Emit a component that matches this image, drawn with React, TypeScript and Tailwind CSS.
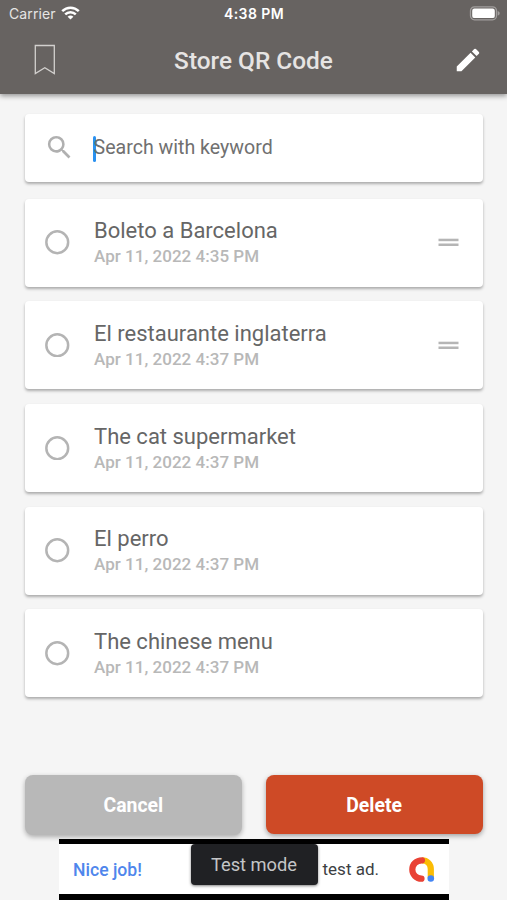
import React from "react";

const items = [
  { title: "Boleto a Barcelona", date: "Apr 11, 2022 4:35 PM", handle: true },
  { title: "El restaurante inglaterra", date: "Apr 11, 2022 4:37 PM", handle: true },
  { title: "The cat supermarket", date: "Apr 11, 2022 4:37 PM", handle: false },
  { title: "El perro", date: "Apr 11, 2022 4:37 PM", handle: false },
  { title: "The chinese menu", date: "Apr 11, 2022 4:37 PM", handle: false },
];

function StatusBar() {
  return (
    <div className="grid h-[27px] grid-cols-3 items-center pl-[9px] pr-[7px] font-[Inter,sans-serif] text-white">
      <div className="flex items-center gap-[5px]">
        <span className="text-[14px] tracking-[0.1px] text-[#e6e5e4]">Carrier</span>
        <svg className="-mt-px" width="19" height="14" viewBox="0 0 19 14" fill="none" stroke="#fff" strokeWidth="2.5">
          <path d="M1.2 5.1C6 .5 13 .5 17.8 5.1" />
          <path d="M4.2 8.3c3-2.9 7.600-2.900 10.600 0" />
          <path d="M9.500 13.600 6.600 10.700c1.700-1.500 4.100-1.500 5.800 0z" fill="#fff" stroke="none" />
        </svg>
      </div>
      <span className="-ml-[1px] text-center text-[14px] font-semibold tracking-[0.400px]">4:38 PM</span>
      <svg className="justify-self-end" width="31" height="15" viewBox="0 0 31 15">
        <rect x="1.500" y="0.800" width="26" height="13" rx="4" fill="none" stroke="#a19e9d" strokeWidth="1.300" />
        <rect x="3.200" y="2.500" width="22.600" height="9.600" rx="2.200" fill="#fff" />
        <path d="M28.700 5v4.600c1.300-.4 2-1.300 2-2.300s-.7-1.900-2-2.300z" fill="#a19e9d" />
      </svg>
    </div>
  );
}

export default function App() {
  return (
    <div className="flex h-[900px] w-[507px] flex-col overflow-hidden bg-[#f5f5f5] font-[Roboto,sans-serif]">
      <header className="relative h-[93.500px] shrink-0 bg-[#676361] shadow-[0_2px_5px_rgba(0,0,0,0.4)]">
        <StatusBar />
        <div className="flex h-[66px] items-center justify-between pl-[34px] pr-[24px]">
          <svg width="22" height="32" viewBox="0 0 22 32" fill="none" stroke="#d2d0ce" strokeWidth="1.300">
            <path d="M1.300 1.500h19v28L10.800 23.800 1.300 29.500z" />
          </svg>
          <h1 className="pr-[2px] pt-[3px] text-[24.400px] font-medium leading-none text-[#e6e4e3]">Store QR Code</h1>
          <svg width="30" height="30" viewBox="0 0 24 24" fill="#fff">
            <path d="M3 17.250V21h3.750L17.810 9.940l-3.750-3.750L3 17.250zM20.710 7.040a1 1 0 0 0 0-1.410l-2.340-2.340a1 1 0 0 0-1.410 0l-1.830 1.830 3.750 3.750 1.830-1.830z" />
          </svg>
        </div>
      </header>

      <main className="flex flex-col px-[25px] pt-[20px]">
        <div className="flex h-[68px] w-[457.500px] items-center rounded-[4px] bg-white pl-[19px] shadow-[0_2px_3px_rgba(0,0,0,0.3)]">
          <svg width="31" height="31" viewBox="0 0 24 24" fill="#b0b0b0">
            <path d="M15.500 14h-.79l-.28-.27A6.471 6.471 0 0 0 16 9.500 6.500 6.500 0 1 0 9.500 16c1.610 0 3.090-.59 4.230-1.570l.27.28v.79l5 4.990L20.490 19l-4.990-5zm-6 0C7.010 14 5 11.990 5 9.500S7.010 5 9.500 5 14 7.010 14 9.500 11.990 14 9.500 14z" />
          </svg>
          <span className="ml-[18px] mt-[2px] h-[26px] w-[2.500px] rounded-full bg-[#2a91f0]" />
          <span className="-ml-[2px] pt-[1.500px] text-[19.600px] leading-6 text-[#707070]">Search with keyword</span>
        </div>

        <ul className="mt-[17px] flex w-[457.500px] flex-col gap-[14.700px]">
          {items.map((item) => (
            <li
              key={item.title}
              className="flex h-[88px] items-center rounded-[4px] bg-white pl-[20px] pr-[24px] shadow-[0_2px_3px_rgba(0,0,0,0.3)]"
            >
              <svg width="24.500" height="24.500" viewBox="0 0 24.500 24.500" fill="none" stroke="#b4b4b4" strokeWidth="2.500">
                <circle cx="12.250" cy="12.250" r="10.900" />
              </svg>
              <div className="ml-[24.500px] flex-1 pt-[2.500px]">
                <div className="text-[22px] leading-[26px] text-[#666]">{item.title}</div>
                <div className="text-[17px] font-medium leading-[25px] tracking-[0.030px] text-[#b8b8b8]">{item.date}</div>
              </div>
              {item.handle && (
                <svg width="21" height="9" viewBox="0 0 21 9" fill="#b5b5b5">
                  <rect x="0.500" y="0.700" width="20" height="2.500" />
                  <rect x="0.500" y="5.500" width="20" height="2.500" />
                </svg>
              )}
            </li>
          ))}
        </ul>

        <div className="mt-[78px] flex w-[457.500px] gap-[24px] text-[19.400px] font-bold text-white">
          <button className="h-[60px] flex-1 rounded-[8px] bg-[#b8b8b8] shadow-[0_2px_5px_rgba(0,0,0,0.3)]">Cancel</button>
          <button className="h-[58.500px] flex-1 rounded-[8px] bg-[#ce4a26] pt-[2px] shadow-[0_2px_5px_rgba(0,0,0,0.35)]">Delete</button>
        </div>
      </main>

      <div className="relative mt-[3.500px] ml-[58.500px] flex h-[61px] w-[390.500px] shrink-0 flex-col bg-black pt-[5.500px]">
        <div className="flex h-[50px] items-center justify-between bg-white pl-[14.500px] pr-[14px]">
          <span className="pt-[2px] text-[17.600px] font-medium text-[#4f86ec]">Nice job!</span>
          <div className="flex items-center gap-[29px]">
            <span className="pt-[1.500px] text-[17px] text-[#3c4043]">test ad.</span>
            <svg className="mt-px" width="27" height="27" viewBox="0 0 27 27" fill="none" strokeWidth="6.200" strokeLinecap="round">
              <path d="M14 4.300c5.200 0 8.800 3.800 8.800 8.800v8.900" stroke="#fbbc04" strokeLinecap="butt" />
              <path d="M14 4.300C8.200 4.300 4.300 8.500 4.300 13.500s3.900 9.200 9.200 9.200" stroke="#e94235" />
              <circle cx="22.800" cy="22.500" r="3.300" fill="#4285f4" />
            </svg>
          </div>
        </div>
        <div className="absolute left-[132px] top-[5px] flex h-[41px] w-[127px] items-center justify-center rounded-[4px] bg-[#202124] text-[18.300px] text-[#c4c5c7] shadow-[0_1px_3px_rgba(0,0,0,0.5)]">
          Test mode
        </div>
      </div>
    </div>
  );
}
